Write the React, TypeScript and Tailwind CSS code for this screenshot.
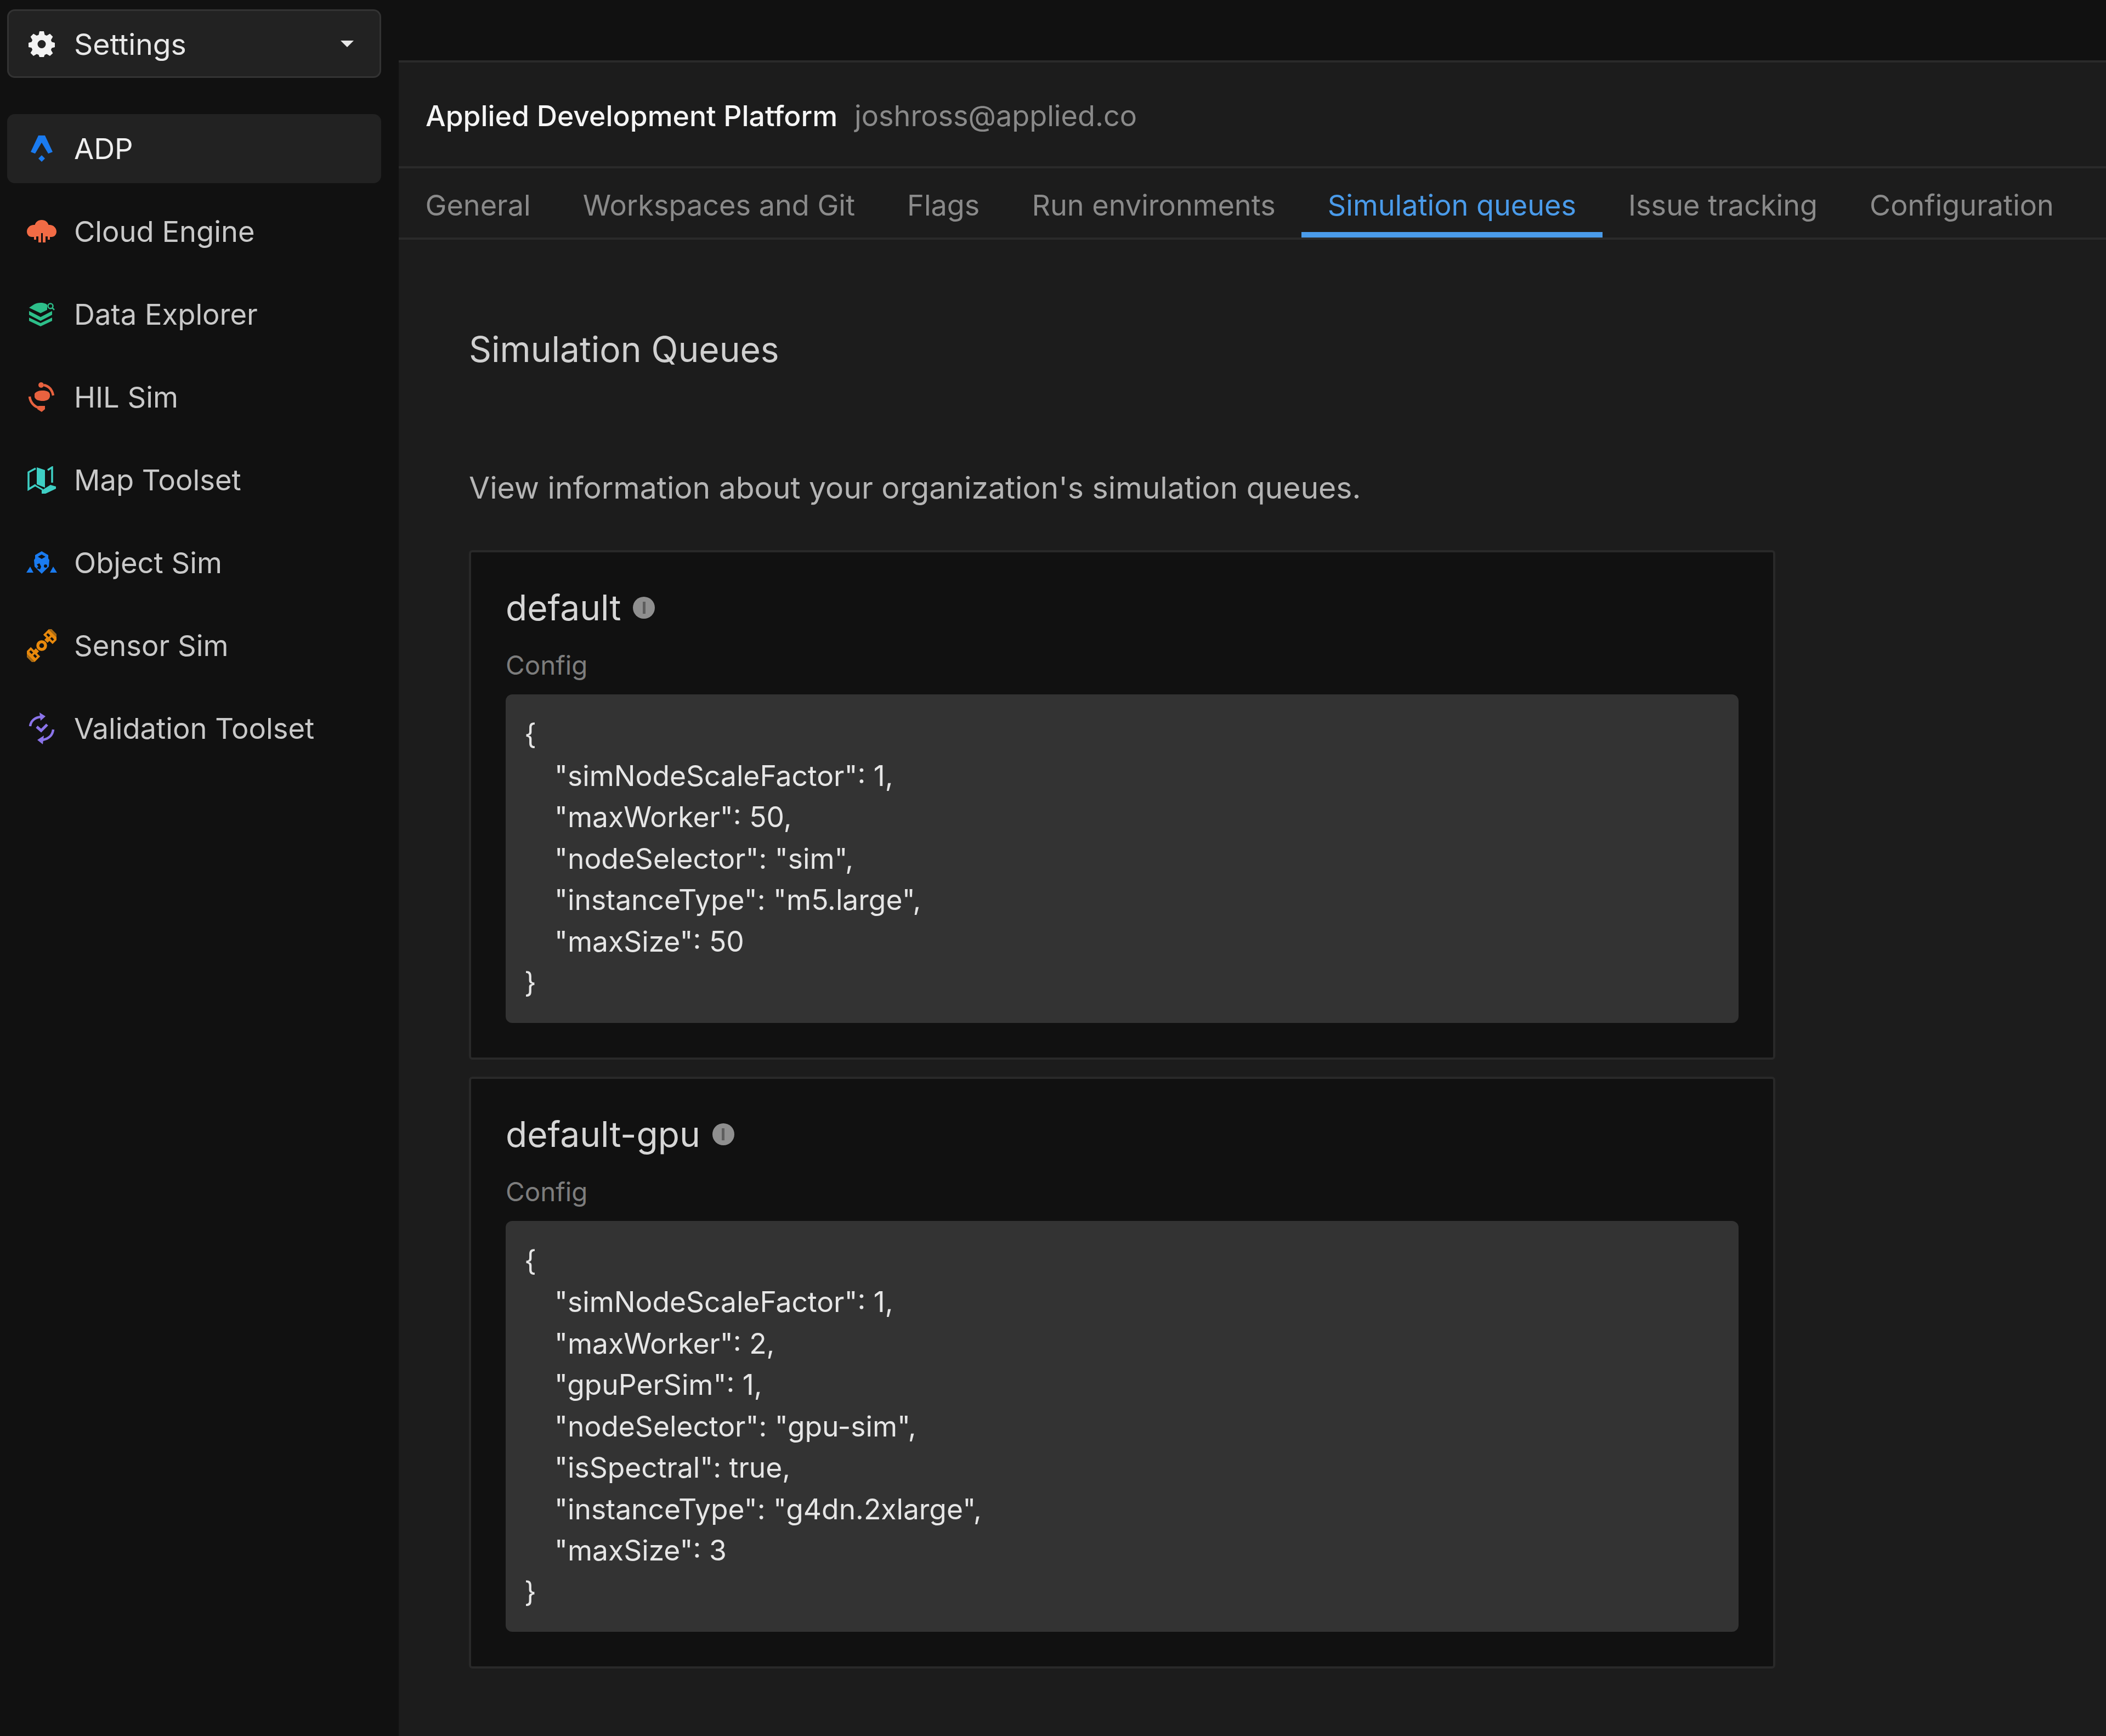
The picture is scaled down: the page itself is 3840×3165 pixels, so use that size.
const font = "[font-family:Inter,'Liberation_Sans',sans-serif]";

function GearIcon() {
  return (
    <svg viewBox="0 0 48 48" className="w-[48px] h-[48px] shrink-0">
      <path
        fill="#f2f2f2"
        fillRule="evenodd"
        d="M20 1h8l1.500 6.600 3.600 1.500L39 5.600l5.400 5.400-3.500 5.900 1.500 3.600L48 22v8l-5.600 1.500-1.500 3.600 3.500 5.900L39 46l-5.900-3.500-3.600 1.500L28 48h-8l-1.500-4-3.600-1.500L9 46l-5.400-5.400 3.500-5.900-1.500-3.600L0 30v-8l5.600-1.500 1.500-3.600L3.600 11 9 5.600l5.900 3.500 3.600-1.500zM24 17a7.500 7.500 0 1 0 0 15 7.500 7.500 0 0 0 0-15z"
      />
    </svg>
  );
}

function AdpIcon() {
  return (
    <svg viewBox="0 0 40 48" className="w-[40px] h-[48px] shrink-0">
      <path fill="#1a7bf0" d="M14 0h12l14 30-8 3-12-20L8 33l-8-3z" />
      <path fill="#1a7bf0" d="M20 36l6 6-6 6-6-6z" />
    </svg>
  );
}

function CloudIcon() {
  return (
    <svg viewBox="0 0 54 42" className="w-[54px] h-[42px] shrink-0">
      <path
        fill="#f26b45"
        d="M27 0c7 0 11 4 12.500 9 8-1 14.500 5 14.500 12 0 6-4 10-9 10h-3v5h-4v-6h-4v11h-5V24h-3v17h-5V30h-4v6h-4v-5H9c-5 0-9-4-9-10 0-7 6.500-13 14.500-12C16 4 20 0 27 0z"
      />
    </svg>
  );
}

function DataIcon() {
  return (
    <svg viewBox="0 0 48 44" className="w-[48px] h-[44px] shrink-0">
      <g fill="#2dbf8a">
        <path d="M22 1c6 0 11 2 12 4v9l-12 6L1 10l9-6c3-2 8-3 12-3z" />
        <path d="M1 16l21 11 21-11v7L22 34 1 23z" />
        <path d="M1 28l21 10 21-10v6L22 44 1 34z" />
      </g>
      <circle cx="40" cy="7" r="4.500" fill="none" stroke="#2dbf8a" strokeWidth="2.500" />
      <path d="M43 10l4 4" stroke="#2dbf8a" strokeWidth="2.500" />
    </svg>
  );
}

function HilIcon() {
  return (
    <svg viewBox="0 0 50 56" className="w-[50px] h-[56px] shrink-0" fill="none">
      <path fill="#e8623f" d="M12 22c3-5 9-6 15-6 7 0 12 2 13 7v4c-1 6-7 8-13 8-8 0-13-2-15-7z" />
      <circle cx="24" cy="6" r="5" fill="#e8623f" />
      <path d="M29 6c9 2 15 8 17 19" stroke="#e8623f" strokeWidth="4.500" />
      <path d="M3 27c1 10 8 19 19 21" stroke="#e8623f" strokeWidth="4.500" />
      <path fill="#e8623f" d="M19 44h12v6l-6 5-8-5z" />
    </svg>
  );
}

function MapIcon() {
  return (
    <svg viewBox="0 0 52 50" className="w-[52px] h-[50px] shrink-0" fill="none">
      <path fill="#3ecfc4" d="M17 2l15 5v32l-15-6z" />
      <path d="M15 4L2 11v31l13-8" stroke="#3ecfc4" strokeWidth="3.500" />
      <path d="M37 7l8-5v28" stroke="#3ecfc4" strokeWidth="3.500" />
      <path d="M2 42l12-7 14 8" stroke="#3ecfc4" strokeWidth="3" />
      <path fill="#3ecfc4" d="M26 44l16-10 10 3v4L33 50h-7z" />
    </svg>
  );
}

function ObjectIcon() {
  return (
    <svg viewBox="0 0 56 42" className="w-[56px] h-[42px] shrink-0">
      <path
        fill="#1a7bf0"
        fillRule="evenodd"
        d="M28 0l12 7v6l2 3-1 12-13 13-13-13-1-12 2-3V7zM28 6l-7 4 7 4 7-4zM24 22l-5 2 3 4-3 3 6 2 2-5zM35 24a3 3 0 1 0 0 6 3 3 0 0 0 0-6z"
      />
      <path fill="#1a7bf0" d="M7 28l6 11H0zM49 28l7 11H43z" />
    </svg>
  );
}

function SensorIcon() {
  return (
    <svg viewBox="0 0 54 60" className="w-[54px] h-[60px] shrink-0" fill="none">
      <g transform="rotate(-45 27 30)">
        <path
          fill="#e8890c"
          fillRule="evenodd"
          d="M-3 18h14v8h5v8h-5v8H-3zM3 22v6h4v-6zM3 32v6h4v-6z"
        />
        <path
          fill="#e8890c"
          fillRule="evenodd"
          d="M57 18H43v8h-5v8h5v8h14zM51 22v6h-4v-6zM51 32v6h-4v-6z"
        />
        <circle cx="27" cy="30" r="7" stroke="#e8890c" strokeWidth="5.500" />
        <path d="M-5 18v24M59 18v24" stroke="#a86a14" strokeWidth="4" />
      </g>
    </svg>
  );
}

function ValidationIcon() {
  return (
    <svg viewBox="0 0 48 58" className="w-[48px] h-[58px] shrink-0" fill="none">
      <path d="M3 25C4 15 12 9 22 8" stroke="#8b74ea" strokeWidth="4.500" />
      <path fill="#8b74ea" d="M20 0l11 7-9 8z" />
      <path d="M45 31c-1 11-9 17-19 19" stroke="#8b74ea" strokeWidth="4.500" />
      <path fill="#8b74ea" d="M28 42l-12 8 10 8z" />
      <path d="M15 26l8 7 11-11" stroke="#8b74ea" strokeWidth="5" />
    </svg>
  );
}

function InfoDot() {
  return (
    <span className="relative flex h-[40px] w-[40px] items-center justify-center rounded-full bg-[#8f8f8f]">
      <span className="h-[22px] w-[5px] bg-[#5e5e5e]"></span>
    </span>
  );
}

const navItems = [
  { label: "ADP", icon: <AdpIcon />, active: true },
  { label: "Cloud Engine", icon: <CloudIcon /> },
  { label: "Data Explorer", icon: <DataIcon /> },
  { label: "HIL Sim", icon: <HilIcon /> },
  { label: "Map Toolset", icon: <MapIcon /> },
  { label: "Object Sim", icon: <ObjectIcon /> },
  { label: "Sensor Sim", icon: <SensorIcon /> },
  { label: "Validation Toolset", icon: <ValidationIcon /> },
];

const tabs = [
  "General",
  "Workspaces and Git",
  "Flags",
  "Run environments",
  "Simulation queues",
  "Issue tracking",
  "Configuration",
];

const defaultConfig = [
  '"simNodeScaleFactor": 1,',
  '"maxWorker": 50,',
  '"nodeSelector": "sim",',
  '"instanceType": "m5.large",',
  '"maxSize": 50',
];

const gpuConfig = [
  '"simNodeScaleFactor": 1,',
  '"maxWorker": 2,',
  '"gpuPerSim": 1,',
  '"nodeSelector": "gpu-sim",',
  '"isSpectral": true,',
  '"instanceType": "g4dn.2xlarge",',
  '"maxSize": 3',
];

function QueueCard({ name, lines }: { name: string; lines: string[] }) {
  return (
    <section className="w-[2382px] rounded-[6px] border-[4px] border-[#292929] bg-[#111111] px-[63px] pt-[56px] pb-[63px]">
      <div className="flex items-center gap-[22px] h-[90px]">
        <h2 className="text-[64px] leading-[90px] text-[#d6d6d6]">{name}</h2>
        <InfoDot />
      </div>
      <div className="mt-[24px] h-[72px] text-[47.500px] leading-[72px] text-[#7d7d7d]">Config</div>
      <div className="mt-[17px] rounded-[12px] bg-[#333333] px-[34px] pt-[35px] pb-[35px] text-[51.500px] leading-[75.500px] text-[#e6e6e6]">
        <div>{"{"}</div>
        {lines.map((line) => (
          <div key={line} className="pl-[55px]">
            {line}
          </div>
        ))}
        <div>{"}"}</div>
      </div>
    </section>
  );
}

export default function App() {
  return (
    <div className={`flex h-[3165px] w-[3840px] overflow-hidden bg-[#111111] antialiased ${font}`}>
      {/* Sidebar */}
      <aside className="w-[727px] shrink-0 px-[13px] pt-[17px]">
        <div className="flex h-[125px] w-[682px] items-center rounded-[14px] border-[3px] border-[#333333] bg-[#222222] pl-[34px] pr-[47px]">
          <span className="flex h-[60px] w-[52px] items-center justify-center">
            <GearIcon />
          </span>
          <span className="ml-[33px] flex-1 pt-[3px] text-[53.500px] text-[#e8e8e8]">Settings</span>
          <span className="h-0 w-0 border-x-[12px] border-t-[12px] border-x-transparent border-t-[#e8e8e8]"></span>
        </div>
        <nav className="mt-[66px] flex flex-col gap-[25px]">
          {navItems.map((item) => (
            <div
              key={item.label}
              className={`flex h-[126px] w-[682px] items-center rounded-[14px] pl-[37px] ${
                item.active ? "bg-[#222222] text-[#efefef]" : "text-[#c9c9c9]"
              }`}
            >
              <span className="flex h-[60px] w-[52px] items-center justify-center">{item.icon}</span>
              <span className="ml-[33px] text-[52.500px]">{item.label}</span>
            </div>
          ))}
        </nav>
      </aside>

      {/* Main */}
      <div className="flex min-w-0 flex-1 flex-col pt-[110px]">
        <main className="flex-1 border-t-[4px] border-[#2a2a2a] bg-[#1c1c1c]">
          <header className="flex h-[193px] items-center gap-[31px] border-b-[4px] border-[#2a2a2a] pl-[49px] pt-[6px]">
            <span className="text-[51.700px] font-medium text-[#f5f5f5]">Applied Development Platform</span>
            <span className="text-[52.200px] text-[#8a8a8a]">joshross@applied.co</span>
          </header>
          <div className="flex h-[130px] items-stretch border-b-[4px] border-[#2a2a2a] pl-[1px]">
            {tabs.map((tab) => (
              <div
                key={tab}
                className={`flex items-center whitespace-nowrap border-b-[10px] px-[47.500px] pt-[19px] text-[52.200px] ${
                  tab === "Simulation queues"
                    ? "border-[#4a9bea] text-[#4a9bea]"
                    : "border-transparent text-[#8a8a8a]"
                }`}
              >
                {tab}
              </div>
            ))}
          </div>
          <div className="pl-[128px] pt-[158px]">
            <h1 className="text-[64px] leading-[84px] text-[#d0d0d0]">Simulation Queues</h1>
            <p className="mt-[168px] text-[55.300px] leading-[84px] text-[#b5b5b5]">
              View information about your organization's simulation queues.
            </p>
            <div className="mt-[72px] flex flex-col gap-[31px]">
              <QueueCard name="default" lines={defaultConfig} />
              <QueueCard name="default-gpu" lines={gpuConfig} />
            </div>
          </div>
        </main>
      </div>
    </div>
  );
}
